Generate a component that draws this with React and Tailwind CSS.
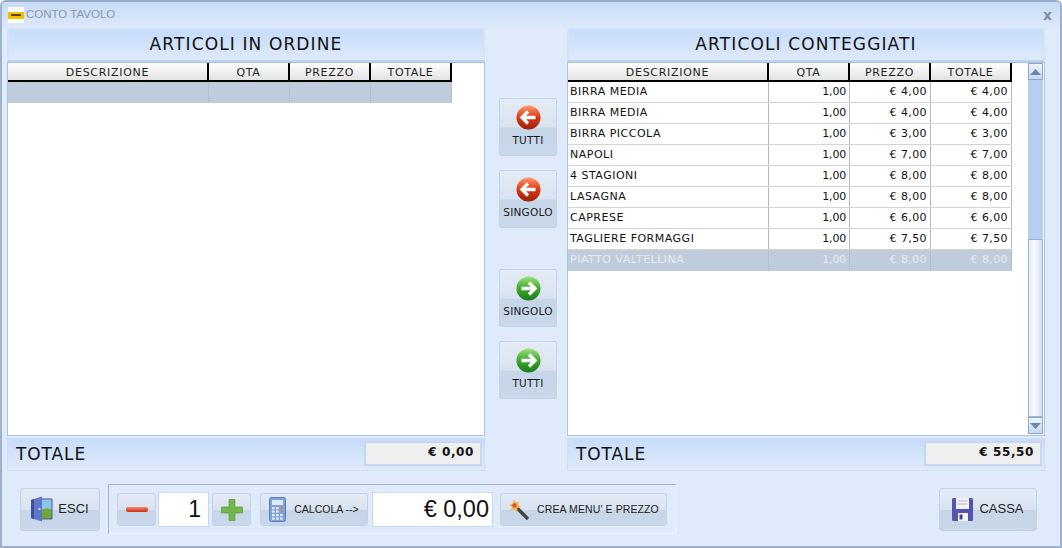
const Arrow = ({ dir, color }) => {
  const id = color === "red" ? "r" : "g";
  const c = color === "red" ? ["#ff9a70", "#d83a12", "#9c1e08"] : ["#9be27a", "#3ea82a", "#1c7a1c"];
  return (
    <svg width="25" height="25" viewBox="0 0 25 25">
      <defs>
        <linearGradient id={id + dir} x1="0" y1="0" x2="0" y2="1">
          <stop offset="0" stopColor={c[0]} />
          <stop offset="0.5" stopColor={c[1]} />
          <stop offset="1" stopColor={c[2]} />
        </linearGradient>
      </defs>
      <circle cx="12.5" cy="12.5" r="12" fill={`url(#${id + dir})`} />
      <path
        d={dir === "left" ? "M19.5 12.5H7M12 6.5l-6 6 6 6" : "M5.5 12.5H18M13 6.5l6 6-6 6"}
        fill="none"
        stroke="#fff"
        strokeWidth="3.4"
      />
    </svg>
  );
};

const SideBtn = ({ label, dir, color, cls = "" }) => (
  <button className={`w-[58px] h-[58px] flex flex-col items-center pt-[6px] rounded-[2px] border border-[#c3d2e6] bg-[linear-gradient(#e4ebf5_0%,#d9e3f0_50%,#c7d5e8_52%,#c9d7ea_100%)] ${cls}`}>
    <Arrow dir={dir} color={color} />
    <span className="mt-[3px] text-[10.5px] tracking-[0.25px] leading-[14px] text-[#1a1a1a]">{label}</span>
  </button>
);

const Head = ({ children }) => (
  <div className="h-[19px] flex items-center justify-center pt-[4px] border-r-2 border-black border-b-2 bg-[linear-gradient(#ffffff,#e2e2e2)] text-[11px] tracking-[0.7px] text-[#222]">
    {children}
  </div>
);

const Cols = "grid grid-cols-[201px_81px_81px_81px] w-[444px]";

const GridHead = () => (
  <div className={Cols}>
    <Head>DESCRIZIONE</Head>
    <Head>QTA</Head>
    <Head>PREZZO</Head>
    <Head>TOTALE</Head>
  </div>
);

const rows = [
  ["BIRRA MEDIA", "1,00", "€ 4,00", "€ 4,00"],
  ["BIRRA MEDIA", "1,00", "€ 4,00", "€ 4,00"],
  ["BIRRA PICCOLA", "1,00", "€ 3,00", "€ 3,00"],
  ["NAPOLI", "1,00", "€ 7,00", "€ 7,00"],
  ["4 STAGIONI", "1,00", "€ 8,00", "€ 8,00"],
  ["LASAGNA", "1,00", "€ 8,00", "€ 8,00"],
  ["CAPRESE", "1,00", "€ 6,00", "€ 6,00"],
  ["TAGLIERE FORMAGGI", "1,00", "€ 7,50", "€ 7,50"],
  ["PIATTO VALTELLINA", "1,00", "€ 8,00", "€ 8,00"],
];

const Row = ({ r, sel }) => (
  <div className={`${Cols} h-[21px] text-[11px] ${sel ? "bg-[#bfccdb] text-[#e6ebf2]" : "text-[#111] border-b border-[#d5d5d5]"}`}>
    {r.map((t, i) => (
      <div
        key={i}
        className={`flex items-center border-r ${sel ? "border-[#b3c0cf]" : "border-[#b8b8b8]"} ${i === 0 ? "pl-[2px] tracking-[0.5px]" : "justify-end pr-[3px]"} ${i === 1 ? "tracking-[-0.2px]" : ""} ${i > 1 ? "tracking-[0.4px]" : ""}`}
      >
        {t}
      </div>
    ))}
  </div>
);

const Panel = ({ title, total, children }) => (
  <div className="w-[478px] flex flex-col">
    <div className="h-[34px] flex items-center justify-center border-2 border-[#d3e2f5] border-b-[#bcd2ee] bg-[linear-gradient(#c6dcfb,#dfeafa)] text-[17px] text-[#111] tracking-[1.12px]">
      {title}
    </div>
    <div className="h-[374px] bg-white border border-[#a9c2e2] relative flex">{children}</div>
    <div className="mt-[2px] h-[33px] flex items-center justify-between pl-[8px] pr-[2px] border border-[#cfdff3] bg-[linear-gradient(#c8ddfb,#dfeafa)]">
      <span className="text-[17px] text-[#111] tracking-[0.9px]">TOTALE</span>
      <div className="w-[118px] h-[25px] mb-[2px] bg-[#efefef] border-2 border-[#c4d8f2] flex items-center justify-end pr-[6px] pb-[3px] text-[12px] tracking-[0.6px] font-bold text-[#111]">
        {total}
      </div>
    </div>
  </div>
);

const ToolBtn = ({ w, h = "h-[33px]", children, cls = "" }) => (
  <button className={`${w} ${h} flex items-center justify-center rounded-[3px] border border-[#c3d2e6] bg-[linear-gradient(#e4ebf5_0%,#d9e3f0_50%,#c7d5e8_52%,#c9d7ea_100%)] text-[#222] ${cls}`}>
    {children}
  </button>
);

const Door = () => (
  <svg width="22" height="26" viewBox="0 0 22 26">
    <rect x="9" y="3" width="12" height="20" fill="#8fc4ea" />
    <path d="M9 15c4-3 8-3 12-1v9H9z" fill="#6fa63e" />
    <path d="M9 3h12v20H9z" fill="none" stroke="#4a5a9c" strokeWidth="1" />
    <path d="M0 4l11-3.5v25L0 22z" fill="#5c78c8" />
    <path d="M0 4l3-1v20l-3-1z" fill="#3f4f9a" />
    <circle cx="8.5" cy="13" r="1" fill="#fff" />
  </svg>
);

const Calc = () => (
  <svg width="17" height="25" viewBox="0 0 17 25">
    <rect x="0.5" y="0.5" width="16" height="24" rx="2" fill="#7fa2dc" stroke="#5a7cc0" />
    <rect x="3" y="3" width="11" height="5" fill="#dfeaf8" />
    {[10, 13.5, 17, 20.5].map((y) =>
      [3, 7, 11].map((x) => (
        <rect key={`${x}-${y}`} x={x} y={y} width="2.6" height="2.2" fill={x === 11 && y < 14 ? "#e08a5a" : "#e8eef8"} />
      ))
    )}
  </svg>
);

const Wand = () => (
  <svg width="22" height="22" viewBox="0 0 22 22">
    <path d="M9 9l11 11" stroke="#444" strokeWidth="3.4" />
    <path d="M6 0l1.6 3.4L11 2.4 10 6l3 2-3.6 1L9 13 6.4 10.2 3 11.4 4 8 1 5.6 4.6 5z" fill="#f2b24a" />
    <circle cx="6.5" cy="6.5" r="2.3" fill="#e2542a" />
  </svg>
);

const Floppy = () => (
  <svg width="21" height="23" viewBox="0 0 21 23">
    <path d="M1.5 0h18A1.5 1.5 0 0 1 21 1.5v20a1.5 1.5 0 0 1-1.5 1.5h-18A1.5 1.5 0 0 1 0 21.5v-20A1.5 1.5 0 0 1 1.5 0z" fill="#5353b0" />
    <rect x="4" y="0" width="13" height="11" fill="#f2f2f4" />
    <path d="M5.5 3h10M5.5 6h10" stroke="#b9b9c9" />
    <rect x="6" y="15" width="10" height="8" fill="#f4f4f8" />
    <rect x="7.5" y="16.5" width="3" height="5" fill="#45458e" />
  </svg>
);

const Tri = ({ up }) => (
  <svg width="11" height="6" viewBox="0 0 11 6">
    <path d={up ? "M5.5 0L11 6H0z" : "M0 0h11L5.5 6z"} fill="#6f87a6" />
  </svg>
);

export default function App() {
  return (
    <div className="w-[1062px] h-[548px] overflow-hidden rounded-t-[6px] border-2 border-[#9fb2cc] border-t-[#98acc9] bg-[#dfeafa] flex flex-col font-['DejaVu_Sans',sans-serif]">
      <div className="h-[26px] shrink-0 flex items-center pl-[6px] pr-[8px] bg-[linear-gradient(#c7dbf8,#dde9fa)]">
        <div className="w-[16px] h-[16px] bg-white flex items-center">
          <div className="w-[16px] h-[7px] bg-[#f2c200] flex items-center justify-center">
            <div className="w-[10px] h-[2px] bg-[#5a4a10]" />
          </div>
        </div>
        <span className="ml-[2px] text-[11.5px] text-[#8b98ab] font-['Liberation_Sans',sans-serif]">CONTO TAVOLO</span>
        <span className="ml-auto text-[14px] font-bold leading-none text-[#7e8c9e]">x</span>
      </div>

      <div className="flex px-[5px]">
        <Panel title="ARTICOLI IN ORDINE" total="€ 0,00">
          <div className="flex flex-col">
            <GridHead />
            <div className={`${Cols} h-[21px] bg-[#bfccdb]`}>
              {[0, 1, 2, 3].map((i) => (
                <div key={i} className="border-r border-[#b3c0cf]" />
              ))}
            </div>
          </div>
        </Panel>

        <div className="w-[82px] flex flex-col items-center pl-[4px] pt-[70px] shrink-0">
          <SideBtn label="TUTTI" dir="left" color="red" />
          <SideBtn label="SINGOLO" dir="left" color="red" cls="mt-[14px]" />
          <SideBtn label="SINGOLO" dir="right" color="green" cls="mt-[41px]" />
          <SideBtn label="TUTTI" dir="right" color="green" cls="mt-[14px]" />
        </div>

        <Panel title="ARTICOLI CONTEGGIATI" total="€ 55,50">
          <div className="flex flex-col">
            <GridHead />
            {rows.map((r, i) => (
              <Row key={i} r={r} sel={i === rows.length - 1} />
            ))}
          </div>
          <div className="absolute right-[1px] top-0 bottom-[1px] w-[15px] flex flex-col bg-[#d8e6f8]">
            <div className="h-[17px] flex items-center justify-center bg-[linear-gradient(#eef4fc,#c4d8f2)] border border-[#8fa6c4]"><Tri up /></div>
            <div className="h-[159px] bg-[#b5cff2]" />
            <div className="flex-1 border border-[#9db3cf] bg-[linear-gradient(90deg,#e6effb,#f6f9fe_40%,#cfe0f6)]" />
            <div className="h-[17px] flex items-center justify-center bg-[linear-gradient(#eef4fc,#c4d8f2)] border border-[#8fa6c4]"><Tri /></div>
          </div>
        </Panel>
      </div>

      <div className="flex items-center pl-[18px] pr-[23px] mt-[13px]">
        <ToolBtn w="w-[80px]" h="h-[43px]" cls="gap-[5px] text-[13px] font-['Liberation_Sans',sans-serif]">
          <Door />
          <span>ESCI</span>
        </ToolBtn>
        <div className="ml-[8px] w-[568px] h-[50px] flex items-center pl-[8px] border-l border-t border-[#a6b3c4] shadow-[inset_-1px_-1px_0_#eef4fc]">
          <ToolBtn w="w-[39px]">
            <span className="block w-[22px] h-[5px] rounded-[2px] bg-[linear-gradient(#f08a6a,#cf2a10)]" />
          </ToolBtn>
          <div className="ml-[2px] w-[51px] h-[35px] bg-white border border-[#c4d8f2] flex items-center justify-end pr-[7px] text-[23px] text-[#111] font-['Liberation_Sans',sans-serif]">1</div>
          <ToolBtn w="w-[39px]" cls="ml-[3px]">
            <svg width="22" height="22" viewBox="0 0 22 22">
              <path d="M9 0h4a1 1 0 0 1 1 1v7h7a1 1 0 0 1 1 1v4a1 1 0 0 1-1 1h-7v7a1 1 0 0 1-1 1H9a1 1 0 0 1-1-1v-7H1a1 1 0 0 1-1-1V9a1 1 0 0 1 1-1h7V1a1 1 0 0 1 1-1z" fill="#72b84a" stroke="#4f8f32" strokeWidth="0.6" />
            </svg>
          </ToolBtn>
          <ToolBtn w="w-[108px]" cls="ml-[9px] gap-[8px] text-[10.5px] font-['Liberation_Sans',sans-serif]">
            <Calc />
            <span>CALCOLA --&gt;</span>
          </ToolBtn>
          <div className="ml-[4px] w-[121px] h-[35px] bg-white border border-[#c4d8f2] flex items-center justify-end pr-[3px] text-[23.5px] text-[#111] font-['Liberation_Sans',sans-serif]">€ 0,00</div>
          <ToolBtn w="w-[167px]" cls="ml-[7px] gap-[7px] text-[10.5px] tracking-[0.1px] font-['Liberation_Sans',sans-serif]">
            <Wand />
            <span>CREA MENU' E PREZZO</span>
          </ToolBtn>
        </div>
        <ToolBtn w="w-[98px]" h="h-[43px]" cls="ml-auto gap-[6px] text-[13px] font-['Liberation_Sans',sans-serif]">
          <Floppy />
          <span>CASSA</span>
        </ToolBtn>
      </div>
    </div>
  );
}
